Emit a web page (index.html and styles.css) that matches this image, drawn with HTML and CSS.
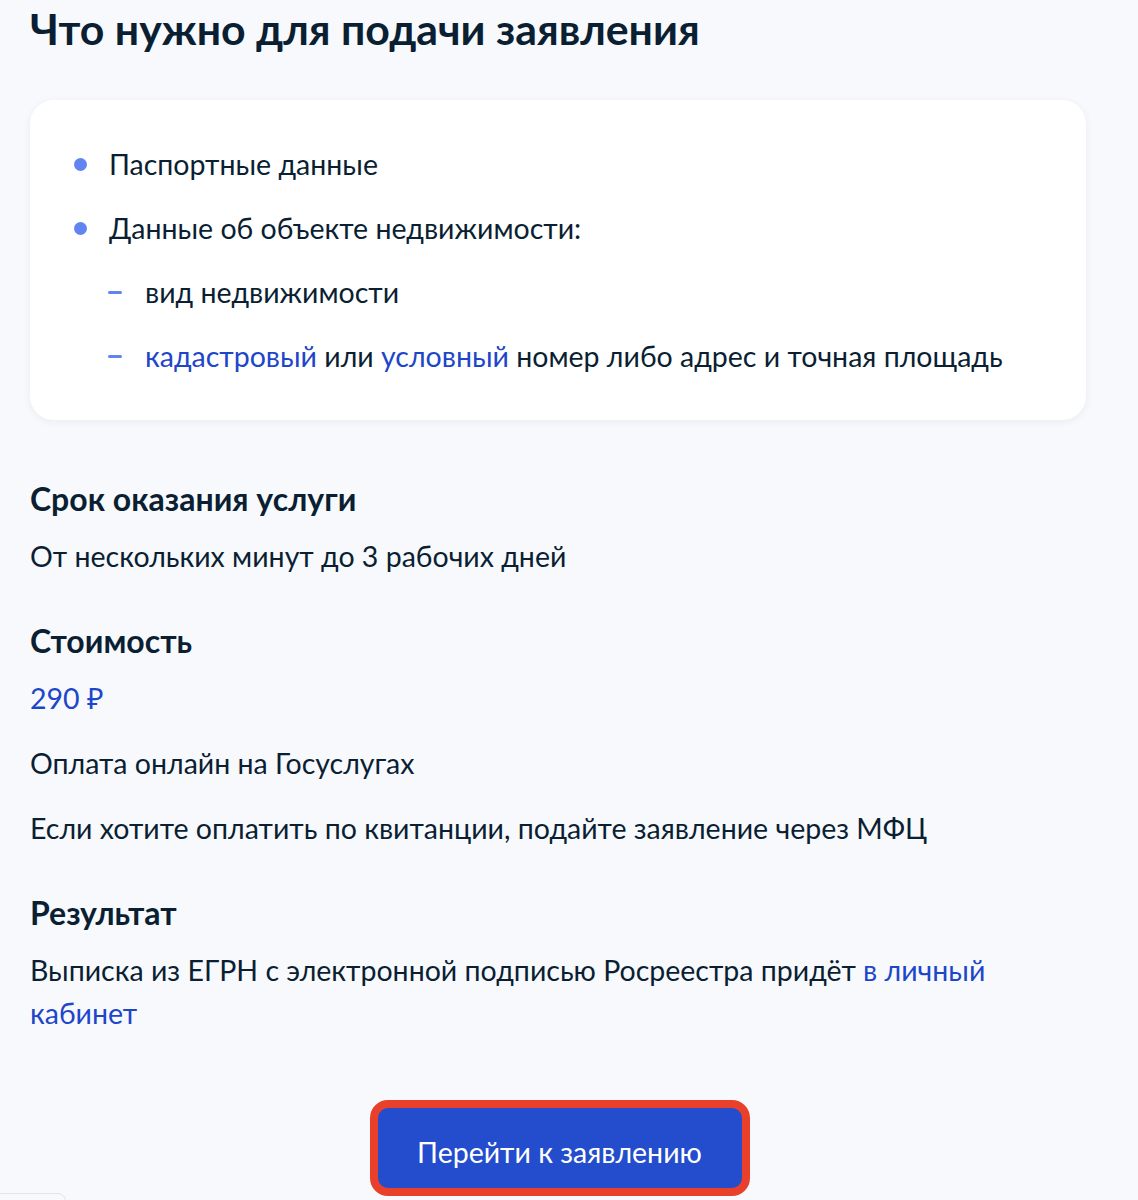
FILE: index.html
```html
<!DOCTYPE html>
<html lang="ru">
<head>
<meta charset="utf-8">
<link rel="stylesheet" href="styles.css">
</head>
<body>
<main class="page">
  <h1 class="title">Что нужно для подачи заявления</h1>
  <section class="card">
    <ul class="list">
      <li class="item"><span>Паспортные данные</span></li>
      <li class="item"><span>Данные об объекте недвижимости:</span></li>
    </ul>
    <ul class="sublist">
      <li class="subitem"><span>вид недвижимости</span></li>
      <li class="subitem"><span><a class="link">кадастровый</a> или <a class="link">условный</a> номер либо адрес и точная площадь</span></li>
    </ul>
  </section>

  <section class="block">
    <h2 class="heading">Срок оказания услуги</h2>
    <p class="text">От нескольких минут до 3 рабочих дней</p>
  </section>

  <section class="block">
    <h2 class="heading">Стоимость</h2>
    <p class="text price">290 ₽</p>
    <p class="text spaced">Оплата онлайн на Госуслугах</p>
    <p class="text spaced">Если хотите оплатить по квитанции, подайте заявление через МФЦ</p>
  </section>

  <section class="block">
    <h2 class="heading">Результат</h2>
    <p class="text wrap">Выписка из ЕГРН с электронной подписью Росреестра придёт <a class="link">в личный кабинет</a></p>
  </section>

  <div class="actions">
    <button class="btn">Перейти к заявлению</button>
  </div>
</main>
<div class="corner"></div>
</body>
</html>
```

FILE: styles.css
```css
html, body {
  margin: 0;
  padding: 0;
  background: #f8f9fd;
}
body {
  font-family: Lato, "Noto Sans", sans-serif;
  color: #0b1f33;
  overflow: hidden;
  height: 1200px;
  position: relative;
}
.page {
  padding: 0 52px 0 30px;
}
.title {
  margin: 0;
  padding-top: 4px;
  font-size: 42.8px;
  line-height: 50px;
  font-weight: 700;
}
.card {
  margin-top: 46px;
  background: #fff;
  border-radius: 24px;
  box-shadow: 0 2px 8px rgba(11, 31, 51, 0.06);
  padding: 32px 0 32px 0;
  height: 256px;
}
.list, .sublist {
  list-style: none;
  margin: 0;
  padding: 0;
}
.item, .subitem {
  font-size: 28.5px;
  line-height: 32px;
  display: flex;
  align-items: center;
  height: 64px;
}
.item {
  padding-left: 79px;
}
.item::before {
  content: "";
  flex: none;
  width: 13px;
  height: 13px;
  border-radius: 50%;
  background: #6185f0;
  margin-left: -35px;
  margin-right: 22px;
}
.subitem {
  padding-left: 78px;
}
.subitem::before {
  content: "";
  flex: none;
  width: 14px;
  height: 3px;
  border-radius: 2px;
  background: #6185f0;
  margin-right: 23px;
}
.link {
  color: #1d46c9;
  text-decoration: none;
}
.block {
  margin-top: 59px;
}
.block + .block {
  margin-top: 43px;
}
.heading {
  margin: 0;
  font-size: 32px;
  line-height: 40px;
  font-weight: 700;
}
.text {
  margin: 16px 0 0;
  font-size: 28.5px;
  line-height: 43px;
}
.price {
  color: #1d46c9;
}
.spaced {
  margin-top: 22px;
}
.wrap {
  max-width: 980px;
}
.actions {
  display: flex;
  justify-content: center;
  margin-top: 65px;
}
.btn {
  font-family: Lato, "Noto Sans", sans-serif;
  font-size: 28.5px;
  color: #fff;
  background: #234dcc;
  border: 8px solid #e8402a;
  border-radius: 18px;
  width: 380px;
  height: 96px;
  padding: 8px 0 0;
  margin-left: 3px;
}
.corner {
  position: absolute;
  left: -10px;
  top: 1193px;
  width: 74px;
  height: 20px;
  border-radius: 8px;
  border: 1px solid #e2e4ea;
  background: #f8f9fd;
}
```
